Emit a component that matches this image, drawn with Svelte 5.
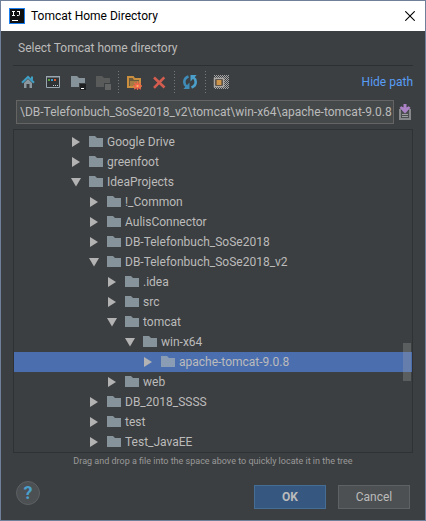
<script>
  let path = $state('\\DB-Telefonbuch_SoSe2018_v2\\tomcat\\win-x64\\apache-tomcat-9.0.8');
  let selected = $state('apache-tomcat-9.0.8');

  const rows = [
    { name: 'Google Drive', depth: 0, open: false },
    { name: 'greenfoot', depth: 0, open: false },
    { name: 'IdeaProjects', depth: 0, open: true },
    { name: '!_Common', depth: 1, open: false },
    { name: 'AulisConnector', depth: 1, open: false },
    { name: 'DB-Telefonbuch_SoSe2018', depth: 1, open: false },
    { name: 'DB-Telefonbuch_SoSe2018_v2', depth: 1, open: true },
    { name: '.idea', depth: 2, open: false },
    { name: 'src', depth: 2, open: false },
    { name: 'tomcat', depth: 2, open: true },
    { name: 'win-x64', depth: 3, open: true },
    { name: 'apache-tomcat-9.0.8', depth: 4, open: false },
    { name: 'web', depth: 2, open: false },
    { name: 'DB_2018_SSSS', depth: 1, open: false },
    { name: 'test', depth: 1, open: false },
    { name: 'Test_JavaEE', depth: 1, open: false }
  ];
</script>

<div class="window">
  <header class="titlebar">
    <svg class="logo" width="16" height="16" viewBox="0 0 16 16" aria-hidden="true">
      <rect width="16" height="16" fill="#1b7ff0" />
      <rect x="1" y="1" width="14" height="14" fill="#111" />
      <path d="M3 3.500h3M4.500 3.500v4M3 7.500h3M8 3.500h3M10.500 3.500v3q0 1-1 1H8M3 12.500h6" fill="none" stroke="#fff" />
    </svg>
    <h1>Tomcat Home Directory</h1>
    <button class="close" aria-label="Close">
      <svg width="10" height="10" viewBox="0 0 10 10"><path d="M.3.3l9.4 9.4M9.7.3L.3 9.7" stroke="#000" stroke-width="1.1" /></svg>
    </button>
  </header>

  <main>
    <p class="prompt">Select Tomcat home directory</p>

    <div class="toolbar">
      <div class="group">
        <button aria-label="Home">
          <svg viewBox="0 0 16 16">
            <path d="M4 9l4-4 4 4v5H9.500v-4h-3v4H4z" fill="#8b989f" />
            <path d="M2 8.800L8 3l6 5.800" fill="none" stroke="#3f9fc4" stroke-width="2" />
            <path d="M11 2.500h2v4l-2-2z" fill="#3f9fc4" />
          </svg>
        </button>
        <button aria-label="Desktop">
          <svg viewBox="0 0 16 16">
            <path d="M1.500 2.500h13v11h-13z" fill="#2f3335" stroke="#9aa7b0" />
            <path d="M1 2h14v1.500H1z" fill="#9aa7b0" />
            <path d="M3 5h2v2H3z" fill="#5ca23c" /><path d="M6 5h2v2H6z" fill="#3b9bd0" /><path d="M9 5h2v2H9z" fill="#d9582c" />
            <path d="M8 11h1v1H8zM10 11h1v1h-1zM12 11h1v1h-1z" fill="#c5cbd0" />
          </svg>
        </button>
        <button aria-label="Project directory">
          <svg viewBox="0 0 16 16">
            <path d="M1 2h6l2 2h6v5H9v4H1z" fill="#87939a" />
            <path d="M10 10h6v6h-6z" fill="#1f2021" /><path d="M11 14h3v1h-3z" fill="#fff" />
          </svg>
        </button>
        <button aria-label="Module directory" disabled>
          <svg viewBox="0 0 16 16">
            <path d="M1 2h6l2 2h6v5H9v4H1z" fill="#595b5b" />
            <path d="M10 10h6v6h-6z" fill="#626464" />
          </svg>
        </button>
      </div>
      <span class="sep"></span>
      <div class="group">
        <button aria-label="New folder">
          <svg viewBox="0 0 16 16">
            <path d="M2 3h5l1.500 2H14v8H2z" fill="#69583c" stroke="#c98f3f" stroke-width="2" />
            <path d="M4 7h9v5H4z" fill="#a47b42" />
            <path d="M11.500 7.500v9M7 12h9M8.300 8.800l6.400 6.400M14.700 8.800l-6.400 6.400" stroke="#f2654b" stroke-width="1.300" />
            <circle cx="11.500" cy="12" r="2.600" fill="#f2654b" /><circle cx="11.500" cy="12" r="1.100" fill="#f7bf63" />
          </svg>
        </button>
        <button aria-label="Delete">
          <svg viewBox="0 0 16 16">
            <path d="M3 3.500l10.500 10M13.300 3.300L3 13.800" stroke="#d45d50" stroke-width="2.600" />
          </svg>
        </button>
      </div>
      <span class="sep"></span>
      <div class="group">
        <button aria-label="Refresh">
          <svg viewBox="0 0 16 16">
            <path d="M6.500 2.500Q2.300 4 2.300 8q0 3 2.200 4.500" fill="none" stroke="#3f8cb8" stroke-width="2.600" />
            <path d="M7.500 8.500V15H1.300z" fill="#3f8cb8" />
            <path d="M9.500 13.500q4.200-1.500 4.200-5.500 0-3-2.200-4.500" fill="none" stroke="#4b9fcb" stroke-width="2.600" />
            <path d="M8.500 7.500V1h6.200z" fill="#4b9fcb" />
          </svg>
        </button>
      </div>
      <span class="sep"></span>
      <div class="group">
        <button aria-label="Show hidden files">
          <svg viewBox="0 0 16 16">
            <defs>
              <pattern id="checker" width="2" height="2" patternUnits="userSpaceOnUse">
                <path d="M0 0h1v1H0zM1 1h1v1H1z" fill="#a4a4a4" />
              </pattern>
            </defs>
            <path d="M1 1h15v14H1z" fill="url(#checker)" />
            <path d="M1.500 4.500h9v8h-9z" fill="#433d35" stroke="#aaa7a5" stroke-width="1.500" />
            <path d="M3.500 6h5v5h-5z" fill="#cc954b" />
          </svg>
        </button>
      </div>
      <a class="hide" href="#path">Hide path</a>
    </div>

    <div class="pathrow" id="path">
      <input type="text" aria-label="Path" bind:value={path} />
      <button class="history" aria-label="Recent paths">
        <svg width="12" height="16" viewBox="0 0 12 16">
          <path d="M0 5h2v2h8V5h2v11H0z" fill="#85878a" />
          <path d="M2 7h8v7H2z" fill="#4c4d50" />
          <path d="M3 10.500h6M3 12.500h6" stroke="#9b9d9f" />
          <path d="M4.500 0h3v3.500l2.200-1.300 1.800 1.600L6 9.500.5 3.800l1.800-1.600 2.200 1.300z" fill="#ab82c5" />
        </svg>
      </button>
    </div>

    <div class="treebox">
      <ul class="tree" role="tree" aria-label="Folders">
        {#each rows as row (row.name)}
          <li role="treeitem" aria-selected={selected === row.name} aria-expanded={row.open}>
            <button
              class="row"
              class:selected={selected === row.name}
              style="padding-left: {57 + row.depth * 18}px"
              onclick={() => (selected = row.name)}
            >
              <svg width="10" height="10" viewBox="0 0 10 10" aria-hidden="true">
                <path d={row.open ? 'M0 1h10L5 9.500z' : 'M1 0v10l8-5z'} fill="#b3b3b3" />
              </svg>
              <svg width="14" height="12" viewBox="0 0 14 12" aria-hidden="true">
                <path d="M0 0h6l2 2h6v9H0z" fill={selected === row.name ? '#8b9cb5' : '#87939a'} />
              </svg>
              <span>{row.name}</span>
            </button>
          </li>
        {/each}
      </ul>
      <span class="thumb"></span>
    </div>

    <p class="hint">Drag and drop a file into the space above to quickly locate it in the tree</p>

    <footer>
      <button class="help" aria-label="Help">?</button>
      <button class="btn primary">OK</button>
      <button class="btn">Cancel</button>
    </footer>
  </main>
</div>

<style>
  :global(body) {
    margin: 0;
  }
  .window {
    box-sizing: border-box;
    min-height: 100vh;
    display: flex;
    flex-direction: column;
    border: 1px solid #71809a;
    background: #3c3f41;
    color: #bbbbbb;
    font: 12px/20px Roboto, 'Noto Sans', sans-serif;
  }
  button {
    padding: 0;
    border: 0;
    background: none;
    color: inherit;
    font: inherit;
  }
  svg {
    display: block;
    flex: none;
  }
  .titlebar {
    display: flex;
    align-items: center;
    height: 30px;
    padding: 0 10px 0 8px;
    background: #fff;
    color: #000;
  }
  h1 {
    flex: 1;
    margin: 0 0 0 6px;
    font-size: 12px;
    font-weight: 400;
  }
  main {
    flex: 1;
    display: flex;
    flex-direction: column;
    padding: 0 12px;
  }
  .prompt {
    margin: 0;
    padding: 7px 5px;
    border-bottom: 1px solid #2d2f30;
  }
  .toolbar {
    display: flex;
    align-items: center;
    gap: 7px;
    height: 32px;
    padding-left: 7px;
  }
  .group {
    display: flex;
    gap: 9px;
  }
  .group svg {
    width: 16px;
    height: 16px;
  }
  .sep {
    width: 1px;
    height: 22px;
    background: repeating-linear-gradient(#777 0 1px, transparent 1px 3px);
  }
  .hide {
    margin-left: auto;
    color: #589df6;
    text-decoration: none;
  }
  .pathrow {
    display: flex;
    align-items: center;
    gap: 5px;
    padding: 2px 2px 5px 3px;
  }
  input {
    flex: 1;
    min-width: 0;
    box-sizing: border-box;
    height: 24px;
    padding: 0 0 0 3px;
    border: 1px solid #646464;
    background: #45494a;
    color: #bbbbbb;
    font: inherit;
    outline: none;
  }
  .treebox {
    position: relative;
    flex: 1;
    border: 1px solid #2f3133;
  }
  .tree {
    margin: 0;
    padding: 2px 0 0;
    list-style: none;
  }
  .row {
    display: flex;
    align-items: center;
    width: 100%;
    height: 20px;
    text-align: left;
    white-space: nowrap;
  }
  .row svg + svg {
    margin: 0 4px 0 8px;
  }
  .selected {
    background: #4b6eaf;
  }
  .thumb {
    position: absolute;
    top: 66%;
    right: 1px;
    width: 8px;
    height: 38px;
    background: rgba(166, 166, 166, 0.3);
  }
  .hint {
    margin: 0;
    font-size: 9px;
    line-height: 16px;
    text-align: center;
    color: #999;
  }
  footer {
    display: flex;
    align-items: flex-end;
    gap: 12px;
    padding: 12px 3px 11px;
  }
  .help {
    box-sizing: border-box;
    align-self: flex-start;
    width: 24px;
    height: 24px;
    margin: 0 auto 4px 0;
    border: 1px solid #5c6063;
    border-radius: 50%;
    background: #4c5053;
    color: #4a9fcb;
    font-size: 18px;
    font-weight: 700;
    line-height: 20px;
  }
  .btn {
    box-sizing: border-box;
    width: 72px;
    height: 24px;
    border: 1px solid #5f6263;
    background: #4c5052;
  }
  .primary {
    border-color: #466d94;
    background: #365880;
    font-weight: 700;
  }
</style>
